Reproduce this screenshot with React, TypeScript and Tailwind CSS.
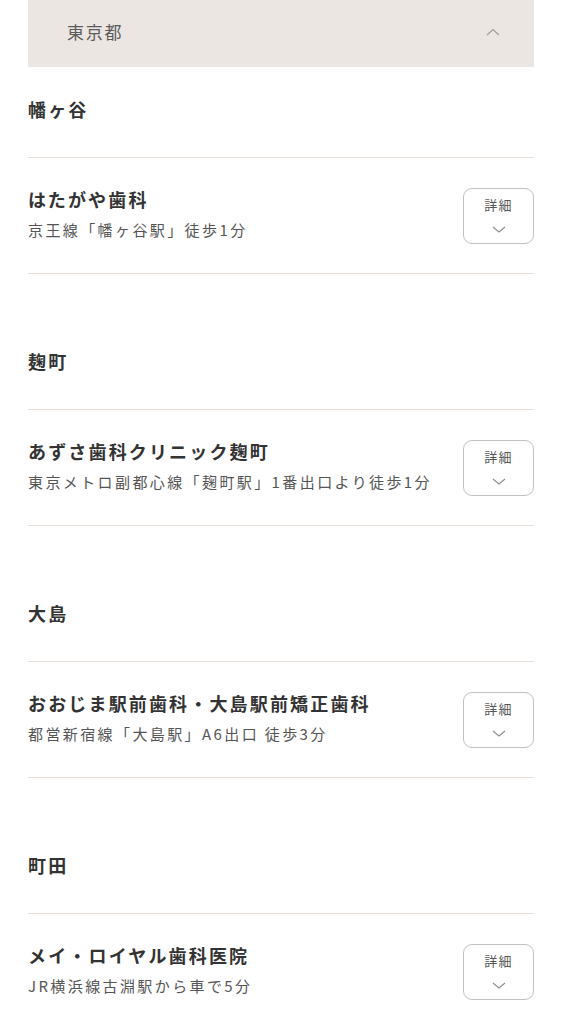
import React from "react";

const sections = [
  { area: "幡ヶ谷", name: "はたがや歯科", access: "京王線「幡ヶ谷駅」徒歩1分" },
  { area: "麹町", name: "あずさ歯科クリニック麹町", access: "東京メトロ副都心線「麹町駅」1番出口より徒歩1分" },
  { area: "大島", name: "おおじま駅前歯科・大島駅前矯正歯科", access: "都営新宿線「大島駅」A6出口 徒歩3分" },
  { area: "町田", name: "メイ・ロイヤル歯科医院", access: "JR横浜線古淵駅から車で5分" },
];

const font = { fontFamily: '"Noto Sans CJK JP", "Noto Sans", sans-serif' };

export default function App() {
  return (
    <div className="min-h-[1024px] bg-white px-[28px]" style={font}>
      <div className="flex h-[67px] items-center justify-between bg-[#ebe6e2] pl-[39px] pr-[33px]">
        <span className="mb-[3px] text-[17px] leading-[24px] tracking-[0.1em] text-[#5a5a5a]">東京都</span>
        <svg width="16" height="10" viewBox="0 0 16 10" fill="none" className="mb-[3px]">
          <path d="M2 8 L8 2.5 L14 8" stroke="#a09c99" strokeWidth="1.2" />
        </svg>
      </div>
      {sections.map((s, i) => (
        <div key={i} className={i === 0 ? "" : "mt-[45px]"}>
          <div className="border-b border-[#e6dfda] pt-[30px] pb-[36px]">
            <h3 className="text-[18px] font-bold leading-[24px] tracking-[0.12em] text-[#333333]">{s.area}</h3>
          </div>
          <div className="flex h-[116px] items-center justify-between border-b border-[#e6dfda]">
            <div className="mb-[3px] flex flex-col gap-[8px]">
              <p className="text-[18px] font-bold leading-[24px] tracking-[0.12em] text-[#333333]">{s.name}</p>
              <p className="text-[15px] leading-[22px] tracking-[0.16em] text-[#555555]">{s.access}</p>
            </div>
            <button className="flex h-[56px] w-[71px] shrink-0 flex-col items-center justify-center gap-[12px] rounded-[9px] border border-[#c4c0bc] bg-white">
              <span className="mb-[1px] text-[13px] leading-[14px] tracking-[0.1em] text-[#555555]">詳細</span>
              <svg width="16" height="9" viewBox="0 0 16 9" fill="none">
                <path d="M2 2 L8 7 L14 2" stroke="#8f8b88" strokeWidth="1.1" />
              </svg>
            </button>
          </div>
        </div>
      ))}
    </div>
  );
}
